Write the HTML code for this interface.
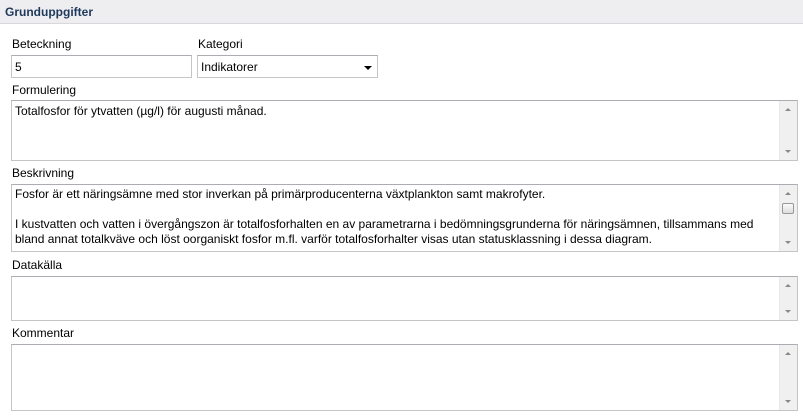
<!DOCTYPE html>
<html><head><style>
body{margin:0;width:803px;height:418px;background:#fff;font-family:"Liberation Sans",sans-serif;font-size:12px;color:#000;position:relative;overflow:hidden}
.hdr{position:absolute;left:0;top:0;width:803px;height:24px;background:#eeeef1;border-bottom:1px solid #d8d8dc;box-sizing:border-box}
.hdr span{position:absolute;left:5px;top:5px;font-weight:bold;color:#1e395b;font-size:12px}
.l{position:absolute;white-space:nowrap}
.box{position:absolute;border:1px solid #c5c5c5;border-top-color:#abadb3;box-sizing:border-box;background:#fff}
.box .t{position:absolute;left:3px;top:3px;right:20px;line-height:15px}
.sb{position:absolute;right:0;top:0;bottom:0;width:17px;background:#f0f0f0;border-left:1px solid #e8e8e8}
.up,.dn{position:absolute;left:5px;width:0;height:0;border-left:3px solid transparent;border-right:3px solid transparent}
.up{top:7px;border-bottom:3px solid #888}
.dn{bottom:7px;border-top:3px solid #888}
.th{position:absolute;left:2px;top:18px;width:12px;height:11px;border:1px solid #999;border-radius:2px;background:linear-gradient(#fafafa,#ddd);box-sizing:border-box}
</style></head><body>
<div class="hdr"><span>Grunduppgifter</span></div>
<div class="l" style="left:12px;top:37px">Beteckning</div>
<div class="l" style="left:198px;top:37px">Kategori</div>
<div class="box" style="left:11px;top:55px;width:181px;height:23px"><div class="t" style="top:4px">5</div></div>
<div class="box" style="left:197px;top:55px;width:181px;height:23px"><div class="t" style="top:4px">Indikatorer</div><div style="position:absolute;right:5px;top:10px;border-left:4px solid transparent;border-right:4px solid transparent;border-top:4px solid #000"></div></div>
<div class="l" style="left:12px;top:83px">Formulering</div>
<div class="box" style="left:11px;top:100px;width:787px;height:61px"><div class="t">Totalfosfor för ytvatten (µg/l) för augusti månad.</div><div class="sb"><div class="up"></div><div class="dn"></div></div></div>
<div class="l" style="left:12px;top:166px">Beskrivning</div>
<div class="box" style="left:11px;top:184px;width:787px;height:68px;overflow:hidden"><div class="t" style="top:2px">Fosfor är ett näringsämne med stor inverkan på primärproducenterna växtplankton samt makrofyter.<br><br>I kustvatten och vatten i övergångszon är totalfosforhalten en av parametrarna i bedömningsgrunderna för näringsämnen, tillsammans med bland annat totalkväve och löst oorganiskt fosfor m.fl. varför totalfosforhalter visas utan statusklassning i dessa diagram.</div><div class="sb"><div class="up"></div><div class="th"></div><div class="dn"></div></div></div>
<div class="l" style="left:12px;top:258px">Datakälla</div>
<div class="box" style="left:11px;top:276px;width:787px;height:45px"><div class="sb"><div class="up"></div><div class="dn"></div></div></div>
<div class="l" style="left:12px;top:326px">Kommentar</div>
<div class="box" style="left:11px;top:344px;width:787px;height:67px"><div class="sb"><div class="up"></div><div class="dn"></div></div></div>
</body></html>
